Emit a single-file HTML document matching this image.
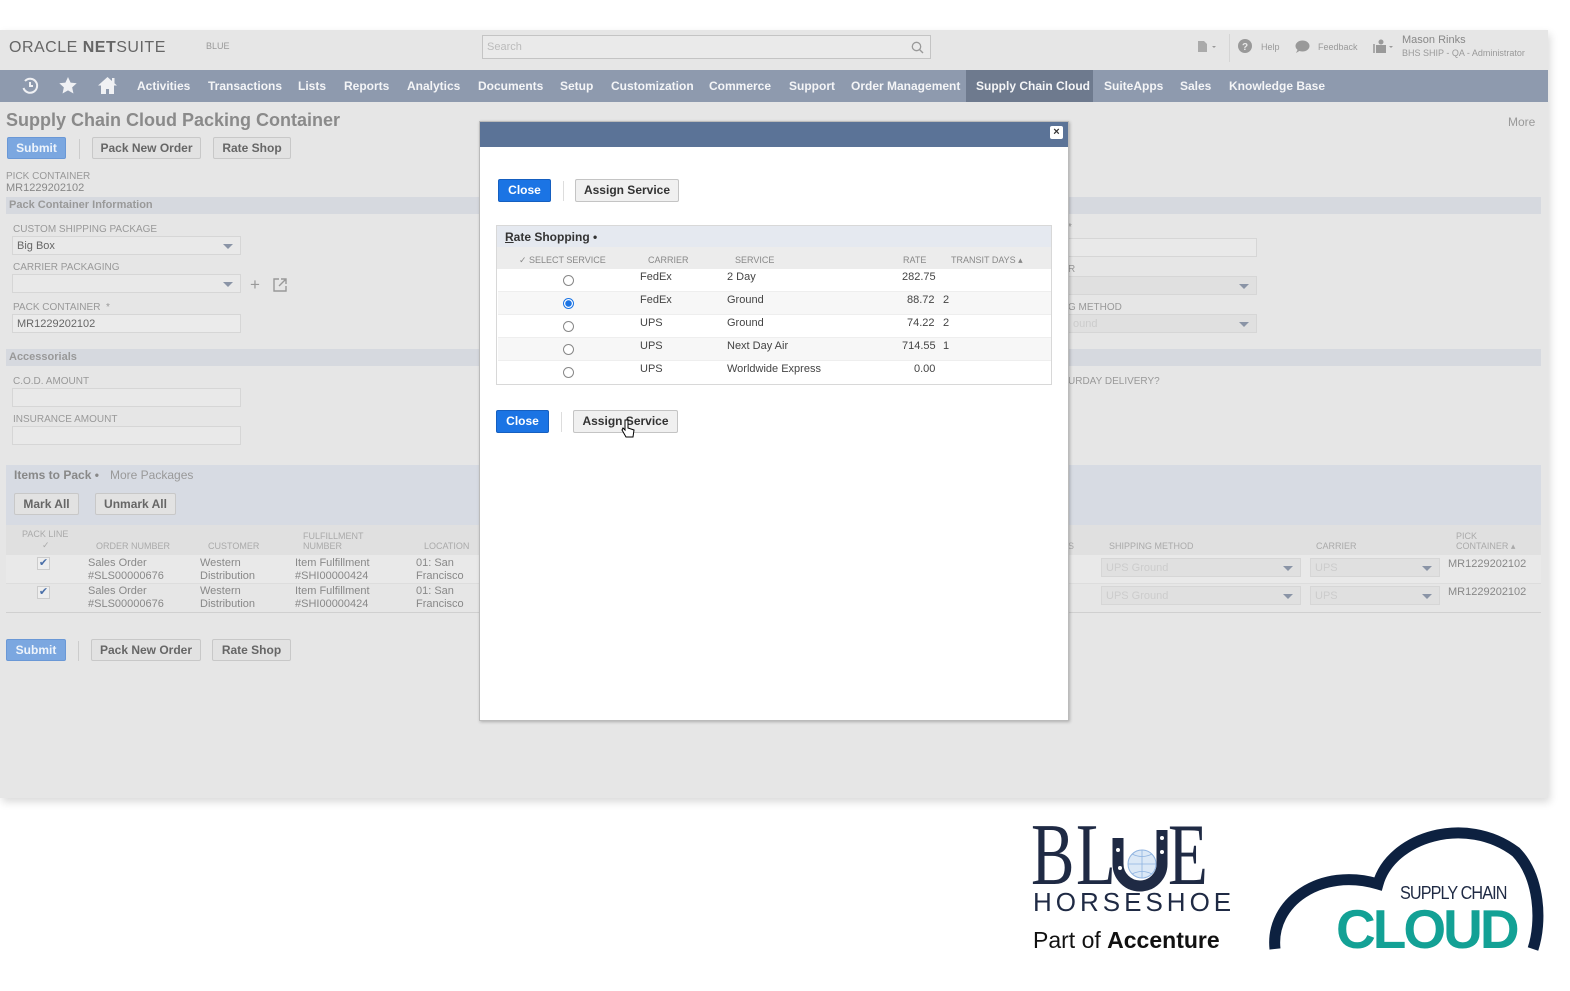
<!DOCTYPE html>
<html><head><meta charset="utf-8">
<style>
*{margin:0;padding:0;box-sizing:border-box}
body{width:1570px;height:991px;background:#fff;position:relative;overflow:hidden;font-family:"Liberation Sans",Arial,sans-serif;color:#555}
.a{position:absolute;white-space:nowrap}
#page{position:absolute;left:0;top:30px;width:1548px;height:768px;background:#e6e6e6;box-shadow:2px 4px 8px rgba(0,0,0,.15)}
.nav{position:absolute;left:0;top:70px;width:1548px;height:32px;background:#8e9aae}
.nav span{position:absolute;top:9px;font-size:12px;font-weight:bold;color:#f4f5f7}
.lbl{font-size:10px;color:#999;text-transform:uppercase}
.inp{position:absolute;height:19px;border:1px solid #d6d6d6;background:#e9e9e9;font-size:11px;color:#666;padding:3px 4px}
.dd::after{content:"";position:absolute;right:7px;top:7px;border:5px solid transparent;border-top:5px solid #8a94a6}
.btn{position:absolute;height:22px;border:1px solid #c8c8c8;background:#e2e2e2;font-size:12px;font-weight:bold;color:#666;text-align:center;line-height:20px;border-radius:2px}
.sub{background:#7ba7e0;color:#eef4fb;border-color:#6a98d6}
.sec{position:absolute;left:6px;width:1535px;height:17px;background:#d6d9df;font-size:11px;font-weight:bold;color:#999;padding:2px 3px}
.t{font-size:11px;color:#888;line-height:13px}
.hd{font-size:9px;color:#aaa;text-transform:uppercase;line-height:10px}
#modal{position:absolute;left:479px;top:121px;width:590px;height:600px;background:#fff;border:1px solid #bbb;box-shadow:1px 1px 3px rgba(0,0,0,.25)}
.mh{position:absolute;left:0;top:0;width:100%;height:25px;background:#5b7397}
.bb{position:absolute;height:23px;background:#1b74e4;border:1px solid #155fc0;color:#fff;font-size:12px;font-weight:bold;text-align:center;line-height:21px;border-radius:2px}
.wb{position:absolute;height:23px;background:#f0f0f0;border:1px solid #c4c4c4;color:#333;font-size:12px;font-weight:bold;text-align:center;line-height:21px;border-radius:2px}
.row{position:absolute;left:1px;width:553px;height:23px;border-bottom:1px solid #eee;font-size:11px;color:#444}
.row span{position:absolute;top:2px}
.rd{position:absolute;left:65px;top:6px;width:11px;height:11px;border:1px solid #888;border-radius:50%;background:#fff}
.bl{position:absolute;top:812px;font-family:'Liberation Serif',serif;font-size:88px;line-height:88px;color:#1f2a44;transform-origin:0 0;transform:scaleX(.74)}
</style></head><body>
<div id="page">
 <div class="a" style="left:9px;top:9px;font-size:16px;color:#666;letter-spacing:.5px">ORACLE <b style="font-weight:bold">NET</b>SUITE</div>
 <div class="a" style="left:206px;top:11px;font-size:9px;color:#999">BLUE</div>
 <div class="a" style="left:482px;top:5px;width:449px;height:24px;border:1px solid #c4c4c4;background:#eaeaea;font-size:11px;color:#bbb;padding:5px 4px">Search
  <svg style="position:absolute;right:6px;top:5px" width="13" height="13" viewBox="0 0 13 13"><circle cx="5.5" cy="5.5" r="4.2" fill="none" stroke="#999" stroke-width="1.3"/><path d="M8.6 8.6L12 12" stroke="#999" stroke-width="1.4"/></svg></div>
 <svg class="a" style="left:1196px;top:10px" width="22" height="16" viewBox="0 0 22 16"><path d="M2 1h6l3 3v8H2z" fill="#aaa"/><path d="M16 6l2 2 2-2z" fill="#999"/></svg>
 <div class="a" style="left:1229px;top:4px;width:1px;height:28px;background:#d5d5d5"></div>
 <svg class="a" style="left:1238px;top:9px" width="14" height="14"><circle cx="7" cy="7" r="7" fill="#999"/><text x="4" y="11" font-size="10" fill="#e8e8e8" font-weight="bold" font-family="Liberation Sans">?</text></svg>
 <div class="a" style="left:1261px;top:12px;font-size:9px;color:#999">Help</div>
 <svg class="a" style="left:1295px;top:10px" width="15" height="13"><ellipse cx="7.5" cy="6" rx="7" ry="5.5" fill="#999"/><path d="M3 9l-2 4 5-3z" fill="#999"/></svg>
 <div class="a" style="left:1318px;top:12px;font-size:9px;color:#999">Feedback</div>
 <svg class="a" style="left:1372px;top:9px" width="24" height="16"><circle cx="9" cy="3" r="2.5" fill="#999"/><rect x="4" y="6" width="10" height="8" fill="#999"/><rect x="1" y="5" width="2" height="9" fill="#aaa"/><path d="M17 7l2 2 2-2z" fill="#999"/></svg>
 <div class="a" style="left:1402px;top:4px;font-size:11px;color:#888">Mason Rinks</div>
 <div class="a" style="left:1402px;top:18px;font-size:9px;color:#999">BHS SHIP - QA - Administrator</div>
</div>
<div class="nav">
 <svg class="a" style="left:21px;top:7px" width="18" height="18" viewBox="0 0 18 18"><path d="M4 4A7 7 0 1 1 2.5 11" fill="none" stroke="#f0f1f4" stroke-width="2"/><path d="M9 5v4h3" fill="none" stroke="#f0f1f4" stroke-width="2"/></svg>
 <svg class="a" style="left:59px;top:7px" width="18" height="17" viewBox="0 0 24 23"><path d="M12 0l3.5 7.6 8.3.9-6.2 5.6 1.8 8.2L12 18.1 4.6 22.3l1.8-8.2L.2 8.5l8.3-.9z" fill="#f0f1f4"/></svg>
 <svg class="a" style="left:97px;top:6px" width="21" height="19" viewBox="0 0 21 19"><path d="M10.5 1L1 9.5h3V18h5v-5h3v5h5V9.5h3z" fill="#f0f1f4"/><rect x="15" y="2" width="2.5" height="5" fill="#f0f1f4"/></svg>
 <span style="left:137px">Activities</span><span style="left:208px">Transactions</span><span style="left:298px">Lists</span><span style="left:344px">Reports</span><span style="left:407px">Analytics</span><span style="left:478px">Documents</span><span style="left:560px">Setup</span><span style="left:611px">Customization</span><span style="left:709px">Commerce</span><span style="left:789px">Support</span><span style="left:851px">Order Management</span>
 <div class="a" style="left:966px;top:0;width:127px;height:32px;background:#6e7a8e"></div>
 <span style="left:976px">Supply Chain Cloud</span><span style="left:1104px">SuiteApps</span><span style="left:1180px">Sales</span><span style="left:1229px">Knowledge Base</span>
</div>
<div class="a" style="left:6px;top:110px;font-size:18px;font-weight:bold;color:#8a8a8a">Supply Chain Cloud Packing Container</div>
<div class="a" style="left:1508px;top:115px;font-size:12px;color:#999">More</div>
<div class="btn sub" style="left:7px;top:137px;width:59px">Submit</div>
<div class="a" style="left:79px;top:139px;width:1px;height:20px;background:#ccc"></div>
<div class="btn" style="left:92px;top:137px;width:109px">Pack New Order</div>
<div class="btn" style="left:213px;top:137px;width:78px">Rate Shop</div>
<div class="a lbl" style="left:6px;top:171px">Pick Container</div>
<div class="a" style="left:6px;top:182px;font-size:11px;color:#888">MR1229202102</div>
<div class="sec" style="top:197px">Pack Container Information</div>
<div class="a lbl" style="left:13px;top:224px">Custom Shipping Package</div>
<div class="inp dd" style="left:12px;top:236px;width:229px">Big Box</div>
<div class="a lbl" style="left:13px;top:262px">Carrier Packaging</div>
<div class="inp dd" style="left:12px;top:274px;width:229px"></div>
<div class="a" style="left:250px;top:275px;font-size:17px;color:#999">+</div>
<svg class="a" style="left:273px;top:278px" width="14" height="14"><path d="M6 1H1v12h12V8M8 1h5v5M13 1L6 8" fill="none" stroke="#999" stroke-width="1.4"/></svg>
<div class="a lbl" style="left:13px;top:302px">Pack Container &nbsp;*</div>
<div class="inp" style="left:12px;top:314px;width:229px;background:#ebebeb">MR1229202102</div>
<div class="sec" style="top:349px">Accessorials</div>
<div class="a lbl" style="left:13px;top:376px">C.O.D. Amount</div>
<div class="inp" style="left:12px;top:388px;width:229px"></div>
<div class="a lbl" style="left:13px;top:414px">Insurance Amount</div>
<div class="inp" style="left:12px;top:426px;width:229px"></div>
<div class="a lbl" style="left:1068px;top:222px">*</div>
<div class="inp" style="left:1068px;top:238px;width:189px"></div>
<div class="a lbl" style="left:1068px;top:264px">R</div>
<div class="inp dd" style="left:1068px;top:276px;width:189px;background:#e0e0e0"></div>
<div class="a lbl" style="left:1068px;top:302px">G Method</div>
<div class="inp dd" style="left:1068px;top:314px;width:189px;background:#e0e0e0;color:#ccc">ound</div>
<div class="a lbl" style="left:1068px;top:376px">URDAY DELIVERY?</div>
<div class="a" style="left:6px;top:465px;width:1535px;height:60px;background:#d7dbe3"></div>
<div class="a" style="left:14px;top:468px;font-size:12px;font-weight:bold;color:#888">Items to Pack •</div>
<div class="a" style="left:110px;top:468px;font-size:12px;color:#999">More Packages</div>
<div class="btn" style="left:14px;top:493px;width:65px">Mark All</div>
<div class="btn" style="left:95px;top:493px;width:81px">Unmark All</div>
<div class="a" style="left:6px;top:525px;width:1535px;height:30px;background:#e0e0e0"></div>
<div class="a hd" style="left:22px;top:529px">Pack Line</div><div class="a hd" style="left:42px;top:540px">✓</div>
<div class="a hd" style="left:96px;top:541px">Order Number</div>
<div class="a hd" style="left:208px;top:541px">Customer</div>
<div class="a hd" style="left:303px;top:531px">Fulfillment<br>Number</div>
<div class="a hd" style="left:424px;top:541px">Location</div>
<div class="a hd" style="left:1068px;top:541px">S</div>
<div class="a hd" style="left:1109px;top:541px">Shipping Method</div>
<div class="a hd" style="left:1316px;top:541px">Carrier</div>
<div class="a hd" style="left:1456px;top:531px">Pick<br>Container ▴</div>
<div class="a" style="left:6px;top:555px;width:1535px;height:29px;background:#e9e9e9;border-bottom:1px solid #ddd"></div>
<div class="a" style="left:6px;top:584px;width:1535px;height:29px;background:#e6e6e6;border-bottom:1px solid #d0d0d0"></div>
<div class="a" style="left:37px;top:557px;width:13px;height:13px;background:#eee;border:1px solid #ccc;font-size:11px;color:#4a6fa8;line-height:11px;text-align:center">✔</div>
<div class="a" style="left:37px;top:586px;width:13px;height:13px;background:#eee;border:1px solid #ccc;font-size:11px;color:#4a6fa8;line-height:11px;text-align:center">✔</div>
<div class="a t" style="left:88px;top:557px">Sales Order<br>#SLS00000676</div><div class="a t" style="left:200px;top:557px">Western<br>Distribution</div><div class="a t" style="left:295px;top:557px">Item Fulfillment<br>#SHI00000424</div><div class="a t" style="left:416px;top:557px">01: San<br>Francisco</div>
<div class="a t" style="left:88px;top:585px">Sales Order<br>#SLS00000676</div><div class="a t" style="left:200px;top:585px">Western<br>Distribution</div><div class="a t" style="left:295px;top:585px">Item Fulfillment<br>#SHI00000424</div><div class="a t" style="left:416px;top:585px">01: San<br>Francisco</div>
<div class="inp dd" style="left:1101px;top:558px;width:200px;background:#e0e0e0;color:#ccc">UPS Ground</div>
<div class="inp dd" style="left:1310px;top:558px;width:130px;background:#e0e0e0;color:#ccc">UPS</div>
<div class="inp dd" style="left:1101px;top:586px;width:200px;background:#e0e0e0;color:#ccc">UPS Ground</div>
<div class="inp dd" style="left:1310px;top:586px;width:130px;background:#e0e0e0;color:#ccc">UPS</div>
<div class="a t" style="left:1448px;top:558px">MR1229202102</div>
<div class="a t" style="left:1448px;top:586px">MR1229202102</div>
<div class="btn sub" style="left:6px;top:639px;width:60px">Submit</div>
<div class="a" style="left:78px;top:641px;width:1px;height:20px;background:#ccc"></div>
<div class="btn" style="left:91px;top:639px;width:110px">Pack New Order</div>
<div class="btn" style="left:212px;top:639px;width:79px">Rate Shop</div>

<div id="modal">
 <div class="mh"><div class="a" style="right:5px;top:4px;width:13px;height:13px;background:#fff;border-radius:2px;font-size:11px;line-height:13px;text-align:center;color:#333;font-weight:bold">×</div></div>
 <div class="bb" style="left:18px;top:57px;width:53px">Close</div>
 <div class="a" style="left:83px;top:59px;width:1px;height:20px;background:#ddd"></div>
 <div class="wb" style="left:95px;top:57px;width:104px">Assign Service</div>
 <div class="a" style="left:16px;top:103px;width:556px;height:160px;border:1px solid #d8d8d8;background:#fff">
  <div class="a" style="left:0;top:0;width:554px;height:21px;background:#e5e9f0"></div>
  <div class="a" style="left:8px;top:4px;font-size:12px;font-weight:bold;color:#333"><u>R</u>ate Shopping •</div>
  <div class="a" style="left:0;top:21px;width:554px;height:22px;background:#ececec"></div>
  <div class="a hd" style="left:22px;top:29px;color:#888">✓ Select Service</div>
  <div class="a hd" style="left:151px;top:29px;color:#888">Carrier</div>
  <div class="a hd" style="left:238px;top:29px;color:#888">Service</div>
  <div class="a hd" style="left:406px;top:29px;color:#888">Rate</div>
  <div class="a hd" style="left:454px;top:29px;color:#888">Transit Days ▴</div>
  <div class="row" style="top:43px"><div class="rd"></div><span style="left:142px">FedEx</span><span style="left:229px">2 Day</span><span style="left:404px">282.75</span></div>
  <div class="row" style="top:66px;background:#f7f7f7"><div class="rd" style="border-color:#1b74e4;background:radial-gradient(circle,#1b74e4 0 3px,#fff 3.5px)"></div><span style="left:142px">FedEx</span><span style="left:229px">Ground</span><span style="left:409px">88.72</span><span style="left:445px">2</span></div>
  <div class="row" style="top:89px"><div class="rd"></div><span style="left:142px">UPS</span><span style="left:229px">Ground</span><span style="left:409px">74.22</span><span style="left:445px">2</span></div>
  <div class="row" style="top:112px;background:#f7f7f7"><div class="rd"></div><span style="left:142px">UPS</span><span style="left:229px">Next Day Air</span><span style="left:404px">714.55</span><span style="left:445px">1</span></div>
  <div class="row" style="top:135px;border:none"><div class="rd"></div><span style="left:142px">UPS</span><span style="left:229px">Worldwide Express</span><span style="left:416px">0.00</span></div>
 </div>
 <div class="bb" style="left:16px;top:288px;width:53px">Close</div>
 <div class="a" style="left:81px;top:290px;width:1px;height:20px;background:#ddd"></div>
 <div class="wb" style="left:93px;top:288px;width:105px">Assign Service</div>
 <svg class="a" style="left:141px;top:297px" width="14" height="20" viewBox="0 0 14 20"><path d="M4 1v10L2 9 1 11l4 7h7l1-7-3-1-3-1V1z" fill="#fff" stroke="#000" stroke-width="1"/></svg>
</div>

<!-- logos -->
<div class="bl" style="left:1031px">B</div>
<div class="bl" style="left:1076px">L</div>
<div class="bl" style="left:1168px">E</div>
<svg class="a" style="left:1110px;top:824px" width="60" height="68" viewBox="0 0 60 68"><path d="M8 14v26a22 22 0 0 0 44 0V6" fill="none" stroke="#1f2a44" stroke-width="11"/><circle cx="32" cy="40" r="14" fill="#dbe8f6" stroke="#8fb3e0"/><path d="M18 40h28M32 26v28M22 30q10 5 20 0M22 50q10-5 20 0" fill="none" stroke="#8fb3e0" stroke-width=".8"/><circle cx="8" cy="26" r="2" fill="#fff"/><circle cx="10" cy="44" r="2" fill="#fff"/><circle cx="52" cy="14" r="2" fill="#fff"/><circle cx="52" cy="28" r="2" fill="#fff"/></svg>
<div class="a" style="left:1033px;top:887px;font-size:26px;color:#1f2a44;letter-spacing:4px">HORSESHOE</div>
<div class="a" style="left:1033px;top:927px;font-size:23px;color:#111">Part of <b>Accenture</b></div>
<svg class="a" style="left:1266px;top:822px" width="280" height="130" viewBox="0 0 280 130"><path d="M9 127C4 80 55 45 112 62C125 15 200 -8 250 30C274 55 276 100 267 127" fill="none" stroke="#0d2140" stroke-width="11"/></svg>
<div class="a" style="left:1400px;top:883px;font-size:18px;color:#1f2a44;letter-spacing:-1px;transform:scaleX(.9);transform-origin:0 0">SUPPLY CHAIN</div>
<div class="a" style="left:1336px;top:897px;font-size:55px;font-weight:bold;color:#13a195;letter-spacing:-3px">CLOUD</div>
</body></html>
